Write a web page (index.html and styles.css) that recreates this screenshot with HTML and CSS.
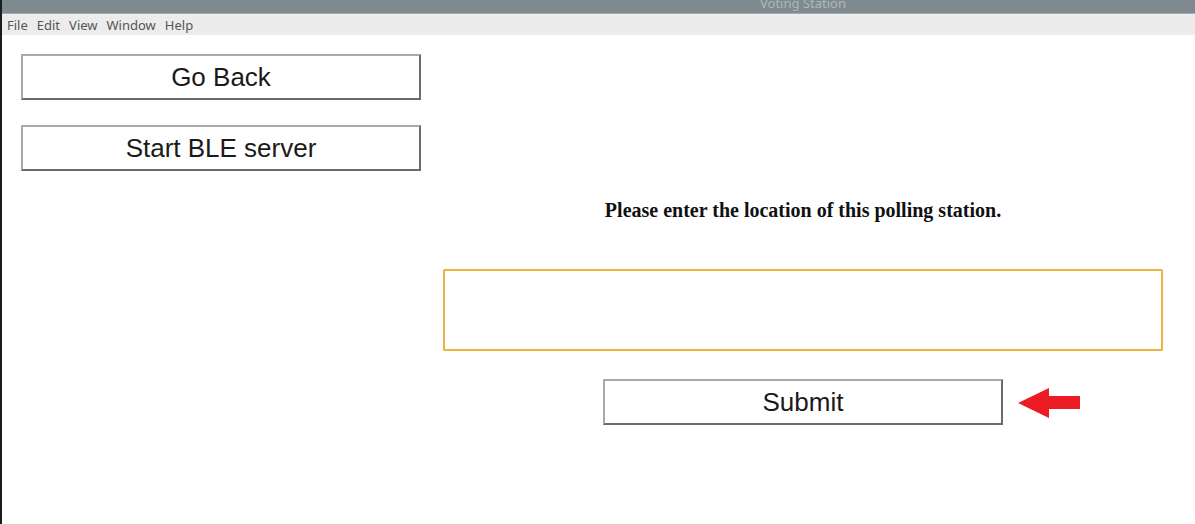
FILE: index.html
```html
<!DOCTYPE html>
<html>
<head>
<meta charset="utf-8">
<link rel="stylesheet" href="styles.css">
</head>
<body>
<div class="window">
  <div class="titlebar"><span class="title">Voting Station</span></div>
  <div class="menubar">
    <span class="menu">File</span>
    <span class="menu">Edit</span>
    <span class="menu">View</span>
    <span class="menu">Window</span>
    <span class="menu">Help</span>
  </div>
  <div class="content">
    <div class="left">
      <button class="btn">Go Back</button>
      <button class="btn">Start BLE server</button>
    </div>
    <div class="right">
      <p class="prompt">Please enter the location of this polling station.</p>
      <input class="location" type="text">
      <div class="submit-row">
        <div class="submit-wrap">
          <button class="btn">Submit</button>
          <svg class="arrow" width="62" height="30" viewBox="0 0 62 30"><polygon points="0,15 31,0 31,8 62,8 62,21 31,21 31,30" fill="#ed1c24"/></svg>
        </div>
      </div>
    </div>
  </div>
</div>
</body>
</html>
```
FILE: styles.css
```css
html, body {
  margin: 0;
  padding: 0;
  background: #fff;
}
.window {
  width: 1195px;
  height: 524px;
  box-sizing: border-box;
  border-left: 2px solid #1c1c1c;
  overflow: hidden;
  font-family: "Liberation Sans", Arial, sans-serif;
}
.titlebar {
  height: 13px;
  background: #7e8a90;
  border-bottom: 1px solid #a3acb0;
  overflow: hidden;
  position: relative;
}
.title {
  display: block;
  padding-left: 758px;
  margin-top: -6px;
  font-family: "Noto Sans", sans-serif;
  font-size: 13px;
  line-height: 18px;
  color: #aeb6ba;
}
.menubar {
  height: 21px;
  background: #ececec;
  display: flex;
  align-items: center;
  gap: 9px;
  padding-left: 5px;
  font-family: "Noto Sans", sans-serif;
  font-size: 13px;
  color: #555;
}
.content {
  display: flex;
}
.left {
  width: 400px;
  padding-left: 19px;
  padding-top: 19px;
  display: flex;
  flex-direction: column;
  gap: 25px;
}
.btn {
  width: 400px;
  height: 46px;
  box-sizing: border-box;
  background: #fff;
  border: 2px solid;
  border-color: #a9a9a9 #6b6b6b #6b6b6b #a9a9a9;
  font-family: "Liberation Sans", Arial, sans-serif;
  font-size: 26px;
  color: #1a1a1a;
  padding: 0;
  margin: 0;
}
.right {
  margin-left: 22px;
  width: 720px;
  display: flex;
  flex-direction: column;
  align-items: center;
}
.prompt {
  margin: 164px 0 0 0;
  font-family: "Liberation Serif", "Times New Roman", serif;
  font-weight: bold;
  font-size: 20px;
  line-height: 22px;
  color: #111;
}
.location {
  margin-top: 48px;
  width: 720px;
  height: 82px;
  box-sizing: border-box;
  border: 2px solid #e8b444;
  border-radius: 2px;
  box-shadow: 0 0 1px #f3d9a0;
  outline: none;
}
.submit-row {
  margin-top: 28px;
}
.submit-wrap {
  position: relative;
}
.arrow {
  position: absolute;
  left: 415px;
  top: 9px;
}
```
